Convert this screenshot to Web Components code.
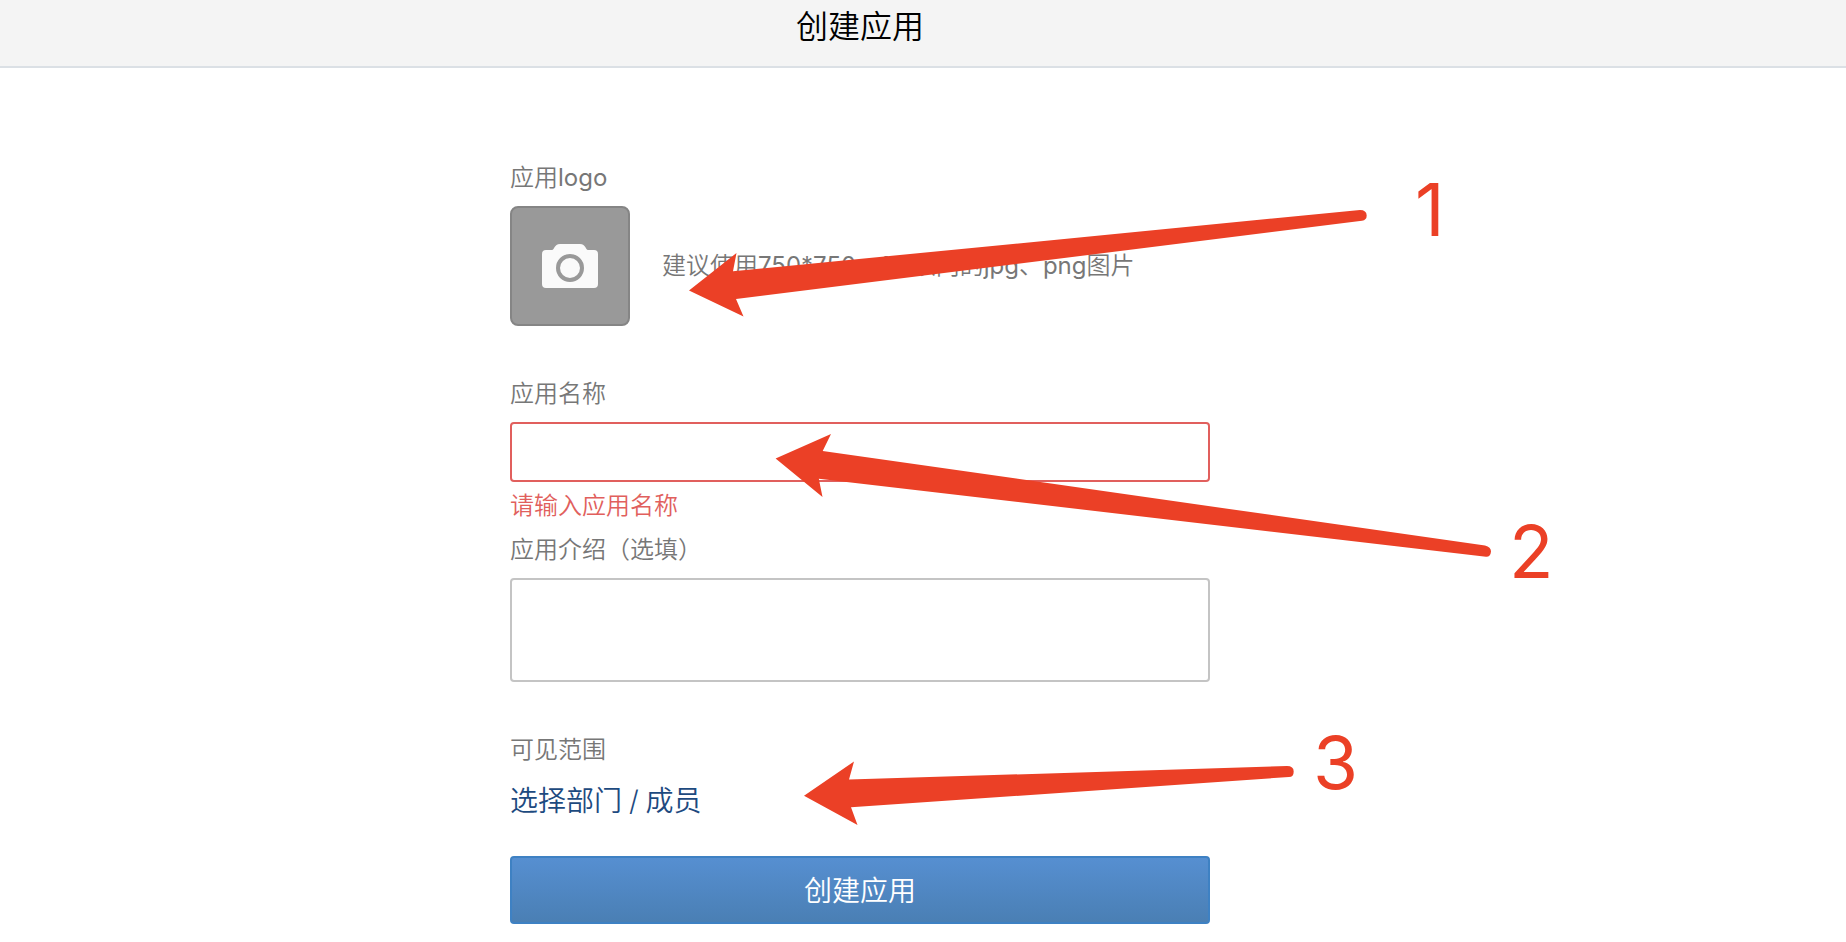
<!DOCTYPE html>
<html lang="zh-CN">
<head>
<meta charset="utf-8">
<title>创建应用</title>
<style>
  body {
    margin: 0;
    background: #fff;
    font-family: Inter, "Noto Sans CJK SC", sans-serif;
    font-weight: 350;
    font-feature-settings: "calt" 0;
  }
</style>
</head>
<body>
<app-page>
  <page-header slot="header">创建应用</page-header>
  <form-field label="应用logo" gap="50">
    <logo-picker hint="建议使用750*750，1M以内的jpg、png图片"></logo-picker>
  </form-field>
  <form-field label="应用名称" error="请输入应用名称" gap="8">
    <text-box height="60" invalid></text-box>
  </form-field>
  <form-field label="应用介绍（选填）" gap="50">
    <text-box height="104"></text-box>
  </form-field>
  <form-field label="可见范围" gap="35">
    <member-link>选择部门 / 成员</member-link>
  </form-field>
  <submit-button>创建应用</submit-button>
  <guide-arrows slot="overlay"></guide-arrows>
</app-page>

<script>
class BaseElement extends HTMLElement {
  constructor() {
    super();
    this.attachShadow({ mode: "open" });
  }

  connectedCallback() {
    this.shadowRoot.innerHTML = this.render();
  }

  // Latin runs need a heavier weight than the Chinese around them
  mixedText(text) {
    return text.replace(/[\x21-\x7e]+/g, `<span style="font-weight: 400">$&</span>`);
  }
}

class AppPage extends BaseElement {
  render() {
    return `
      <style>
        :host {
          display: block;
          position: relative;
          height: 942px;
          overflow: hidden;
        }

        main {
          display: flex;
          flex-direction: column;
          box-sizing: border-box;
          width: 700px;
          margin-left: 510px;
          padding-top: 92px;
        }
      </style>
      <slot name="header"></slot>
      <main><slot></slot></main>
      <slot name="overlay"></slot>
    `;
  }
}

class PageHeader extends BaseElement {
  render() {
    return `
      <style>
        :host {
          display: block;
          box-sizing: border-box;
          height: 68px;
          padding: 3px 126px 0 0;
          border-bottom: 2px solid #dbe0e5;
          background: #f4f4f4;
          color: #000;
          font-size: 32px;
          line-height: 48px;
          text-align: center;
        }
      </style>
      <slot></slot>
    `;
  }
}

class FormField extends BaseElement {
  render() {
    const error = this.getAttribute("error");

    return `
      <style>
        :host {
          display: block;
          margin-bottom: ${this.getAttribute("gap")}px;
          color: #777;
          font-size: 24px;
          line-height: 36px;
        }

        .label {
          margin-bottom: 10px;
        }

        .error {
          margin-top: 6px;
          color: #e15f5d;
        }
      </style>
      <div class="label">${this.mixedText(this.getAttribute("label"))}</div>
      <slot></slot>
      ${error ? `<div class="error">${error}</div>` : ""}
    `;
  }
}

class LogoPicker extends BaseElement {
  render() {
    return `
      <style>
        :host {
          display: flex;
          align-items: center;
          gap: 32px;
          white-space: nowrap;
        }

        .logo {
          display: flex;
          align-items: center;
          justify-content: center;
          box-sizing: border-box;
          width: 120px;
          height: 120px;
          border: 2px solid #858585;
          border-radius: 8px;
          background: #999;
        }
      </style>
      <div class="logo">
        <svg width="56" height="44" viewBox="0 0 56 44" aria-hidden="true">
          <path fill="#fafafa" d="M4 6h6c2.600 0 2-6 8-6h20c6 0 5.400 6 8 6h6a4 4 0 0 1 4 4v30a4 4 0 0 1-4 4H4a4 4 0 0 1-4-4V10a4 4 0 0 1 4-4z"/>
          <circle cx="28" cy="24" r="12" fill="none" stroke="#999" stroke-width="4"/>
        </svg>
      </div>
      <div class="hint">${this.mixedText(this.getAttribute("hint"))}</div>
    `;
  }
}

class TextBox extends BaseElement {
  render() {
    return `
      <style>
        :host {
          display: block;
          box-sizing: border-box;
          height: ${this.getAttribute("height")}px;
          border: 2px solid ${this.hasAttribute("invalid") ? "#e15f5d" : "#c4c4c4"};
          border-radius: 4px;
          background: #fff;
        }
      </style>
    `;
  }
}

class MemberLink extends BaseElement {
  render() {
    return `
      <style>
        :host {
          display: block;
          margin-top: 13px;
          color: #1d4a80;
          font-size: 28px;
          line-height: 40px;
          word-spacing: -1px;
        }
      </style>
      <slot></slot>
    `;
  }
}

class SubmitButton extends BaseElement {
  render() {
    return `
      <style>
        :host {
          display: flex;
          align-items: center;
          justify-content: center;
          box-sizing: border-box;
          height: 68px;
          padding-top: 1px;
          border: 2px solid #3e81c3;
          border-radius: 4px;
          background: linear-gradient(#568fd1, #4a7fb4);
          color: #fff;
          font-size: 28px;
          line-height: 40px;
        }
      </style>
      <slot></slot>
    `;
  }
}

class GuideArrows extends BaseElement {
  render() {
    return `
      <style>
        :host {
          position: absolute;
          inset: 0;
          pointer-events: none;
        }

        svg {
          display: block;
          fill: #eb4026;
          font-size: 73px;
          font-weight: 400;
        }
      </style>
      <svg width="1846" height="942" viewBox="0 0 1846 942">
        <path d="M689 290.500 736.500 253 733 271.300 1360 210Q1366.500 210 1366.700 215.500Q1366.700 220 1362 220.800L736 299 743.500 316.500z"/>
        <path d="M775.600 458.600 831 434 822.700 451 1485 545.500Q1491 547 1491 551.500Q1490.500 557 1486 556.700L818.800 478.700 822.500 497z"/>
        <path d="M804 795.700 854 761.500 849 779.600 1287 766Q1293.700 766 1293.700 771.500Q1293.700 777 1289 777L851 807.300 857.500 825z"/>
        <text x="1415" y="236">1</text>
        <text x="1509" y="578">2</text>
        <text x="1313" y="789">3</text>
      </svg>
    `;
  }
}

customElements.define("app-page", AppPage);
customElements.define("page-header", PageHeader);
customElements.define("form-field", FormField);
customElements.define("logo-picker", LogoPicker);
customElements.define("text-box", TextBox);
customElements.define("member-link", MemberLink);
customElements.define("submit-button", SubmitButton);
customElements.define("guide-arrows", GuideArrows);
</script>
</body>
</html>
